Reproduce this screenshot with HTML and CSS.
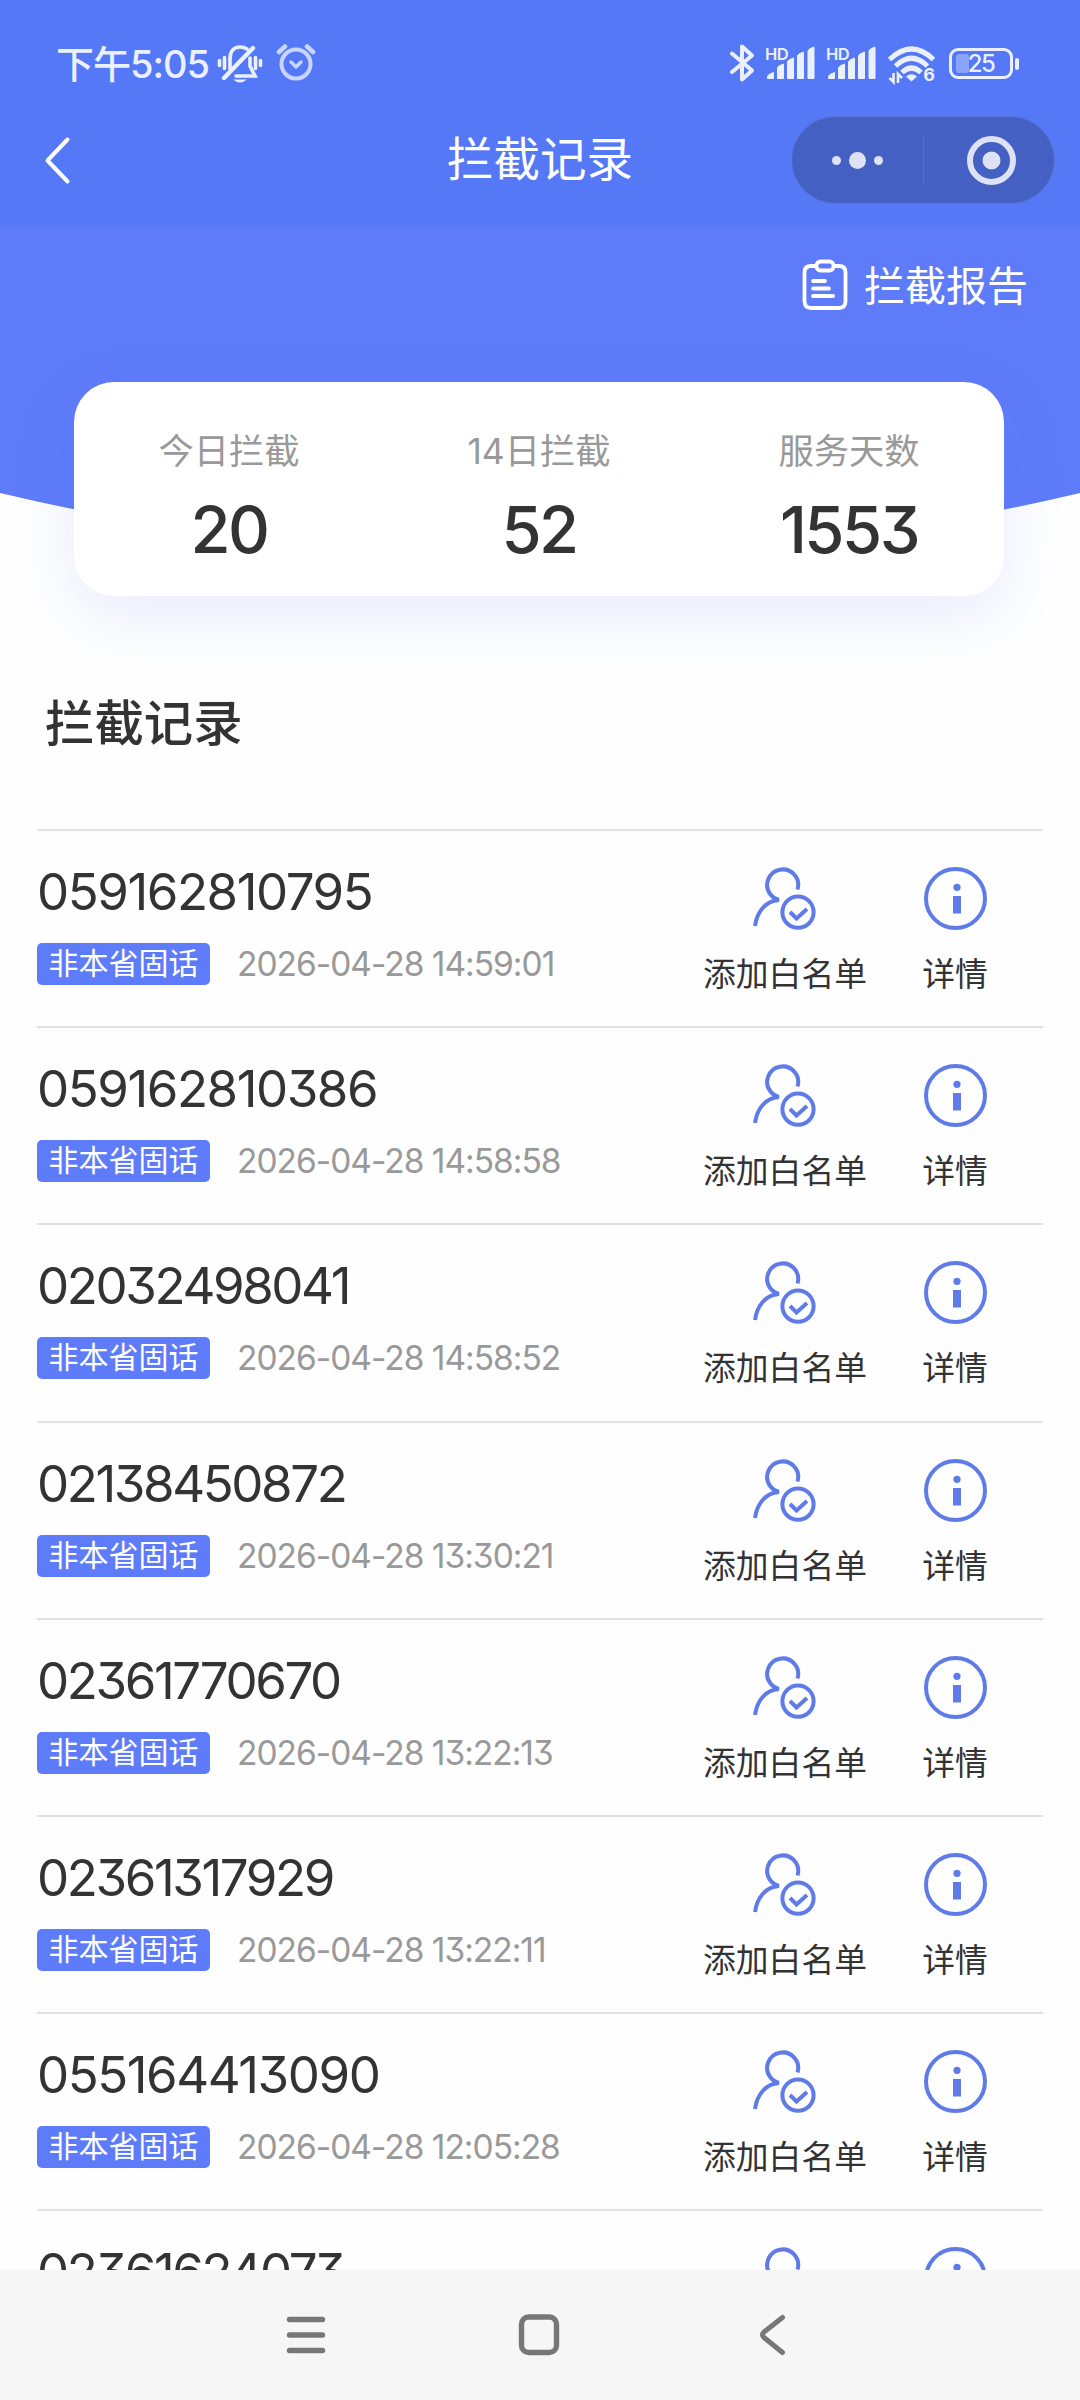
FILE: index.html
```html
<!DOCTYPE html>
<html lang="zh-CN">
<head>
<meta charset="utf-8">
<title>拦截记录</title>
<link rel="stylesheet" href="styles.css">
</head>
<body>
<svg class="defs" aria-hidden="true">
  <symbol id="user-check" viewBox="0 0 66 66">
    <g fill="none" stroke="#5f7be8" stroke-width="4">
      <path d="M3 60C5 45 14 35 27 34Q22 33 18.500 28.500A15.500 15.500 0 1 1 45.500 23.500"/>
      <circle cx="46" cy="46.200" r="15.600"/>
      <path d="M38 46l6.500 6.500L55 43"/>
    </g>
  </symbol>
  <symbol id="info" viewBox="0 0 66 66">
    <circle cx="33.500" cy="32.500" r="29.500" fill="none" stroke="#5f7be8" stroke-width="4"/>
    <circle cx="35" cy="21.300" r="3.600" fill="#5f7be8"/>
    <path d="M31 30h8v17.500h-8z" fill="#5f7be8"/>
  </symbol>
  <symbol id="signal" viewBox="0 0 50 38">
    <path fill="#eaf0ff" stroke="#eaf0ff" stroke-width="1" stroke-linejoin="round" d="M2.500 33.500v-2q0-2 6-4v6zM12.500 33.500V23q0-2 6-4v14.500zM22.500 33.500V17q0-2 6-4v20.500zM32.500 33.500V11q0-2 6-4v26.500zM43 33.500V6q0-2 6-4v31.500z"/>
  </symbol>
</svg>
<div class="phone">
  <header class="topbar">
    <div class="status">
      <div class="status-left">
        <span class="clock">下午5:05</span>
        <svg class="mute" viewBox="0 0 46 42" fill="none" stroke="#eaf0ff" stroke-width="3.600" stroke-linecap="round">
          <path d="M2.500 18.500v5M7.500 15.500v11M38.500 15.500v11M43.500 18.500v5"/>
          <path d="M13 27V17C13 8 18 5 23 5Q27 5 30 7M33 16v8l5 10H19"/>
          <path d="M7 36L36 6" stroke-width="4.400"/>
          <path d="M16 37.500h14q-7 6-14 0z" fill="#eaf0ff" stroke="none"/>
        </svg>
        <svg class="alarm" viewBox="0 0 40 40" fill="none" stroke="#c8d5ff" stroke-linecap="round" stroke-linejoin="round">
          <circle cx="20" cy="22" r="14.500" stroke-width="4"/>
          <path d="M15 20l5 5 5-5" stroke-width="3.500"/>
          <path d="M3 10l6-5.500M37 10l-6-5.500" stroke-width="4.500"/>
        </svg>
      </div>
      <div class="status-right">
        <svg class="bluetooth" viewBox="0 0 24 40" fill="none" stroke="#eaf0ff" stroke-width="4" stroke-linejoin="round" stroke-linecap="round"><path d="M2 10.500l20 17-10 9V3.500l10 9L2 29"/></svg>
        <div class="cell"><span class="hd">HD</span><svg class="bars"><use href="#signal"/></svg></div>
        <div class="cell"><span class="hd">HD</span><svg class="bars"><use href="#signal"/></svg></div>
        <div class="wifi">
          <svg viewBox="0 0 48 40" fill="none" stroke="#eaf0ff">
            <path d="M1.500 14.500Q23.500-6.500 45.500 14.500M7.500 21Q23.500 5.500 39.500 21M14 27.500Q23.500 18.500 33 27.500" stroke-width="5"/>
            <path d="M18 31.500q5.500-4.500 11 0L23.500 36.500z" fill="#eaf0ff" stroke="none"/>
            <path d="M5.500 28v9l-4-4M10 38v-9l4 4" stroke-width="2.600"/>
          </svg>
          <span class="wifi-gen">6</span>
        </div>
        <div class="battery"><span class="level"></span><span class="percent">25</span></div>
        <span class="battery-tip"></span>
      </div>
    </div>
    <div class="navbar">
      <svg class="back" viewBox="0 0 28 50" fill="none" stroke="#fff" stroke-width="4" stroke-linecap="round" stroke-linejoin="round"><path d="M24.500 3.500L4.500 24.500L24.500 45.500"/></svg>
      <h1 class="title">拦截记录</h1>
      <div class="capsule">
        <div class="more"><i class="dot"></i><i class="dot big"></i><i class="dot"></i></div>
        <div class="close"><i class="ring"></i></div>
      </div>
    </div>
  </header>
  <main class="content">
    <section class="hero">
      <svg class="hero-bg" viewBox="0 0 1080 300"><path d="M0 0H1080V268Q820 330 540 330T0 268Z" fill="#5e7bf9"/></svg>
      <a class="report">
        <svg class="clipboard" viewBox="0 0 46 52" fill="none" stroke="#fff" stroke-width="3.800" stroke-linecap="round" stroke-linejoin="round">
          <path d="M14 7H9Q2.500 7 2.500 13.500V42Q2.500 49 9 49H37Q43.500 49 43.500 42V13.500Q43.500 7 37 7H32"/>
          <rect x="14.500" y="2.500" width="17" height="9" rx="4"/>
          <path d="M11 22h12M11 29.500h16M11 37h20"/>
        </svg>
        <span class="report-label">拦截报告</span>
      </a>
      <div class="stats">
        <div class="stat"><span class="stat-label">今日拦截</span><span class="stat-value">20</span></div>
        <div class="stat"><span class="stat-label">14日拦截</span><span class="stat-value">52</span></div>
        <div class="stat"><span class="stat-label">服务天数</span><span class="stat-value">1553</span></div>
      </div>
    </section>
    <h2 class="heading">拦截记录</h2>
    <ul class="records">
      <li class="record"><div class="info"><span class="number long">059162810795</span><div class="meta"><span class="tag">非本省固话</span><span class="time">2026-04-28 14:59:01</span></div></div><div class="action add"><svg><use href="#user-check"/></svg><span>添加白名单</span></div><div class="action detail"><svg><use href="#info"/></svg><span>详情</span></div></li>
      <li class="record"><div class="info"><span class="number long">059162810386</span><div class="meta"><span class="tag">非本省固话</span><span class="time">2026-04-28 14:58:58</span></div></div><div class="action add"><svg><use href="#user-check"/></svg><span>添加白名单</span></div><div class="action detail"><svg><use href="#info"/></svg><span>详情</span></div></li>
      <li class="record"><div class="info"><span class="number">02032498041</span><div class="meta"><span class="tag">非本省固话</span><span class="time">2026-04-28 14:58:52</span></div></div><div class="action add"><svg><use href="#user-check"/></svg><span>添加白名单</span></div><div class="action detail"><svg><use href="#info"/></svg><span>详情</span></div></li>
      <li class="record"><div class="info"><span class="number">02138450872</span><div class="meta"><span class="tag">非本省固话</span><span class="time">2026-04-28 13:30:21</span></div></div><div class="action add"><svg><use href="#user-check"/></svg><span>添加白名单</span></div><div class="action detail"><svg><use href="#info"/></svg><span>详情</span></div></li>
      <li class="record"><div class="info"><span class="number">02361770670</span><div class="meta"><span class="tag">非本省固话</span><span class="time">2026-04-28 13:22:13</span></div></div><div class="action add"><svg><use href="#user-check"/></svg><span>添加白名单</span></div><div class="action detail"><svg><use href="#info"/></svg><span>详情</span></div></li>
      <li class="record"><div class="info"><span class="number">02361317929</span><div class="meta"><span class="tag">非本省固话</span><span class="time">2026-04-28 13:22:11</span></div></div><div class="action add"><svg><use href="#user-check"/></svg><span>添加白名单</span></div><div class="action detail"><svg><use href="#info"/></svg><span>详情</span></div></li>
      <li class="record"><div class="info"><span class="number long">055164413090</span><div class="meta"><span class="tag">非本省固话</span><span class="time">2026-04-28 12:05:28</span></div></div><div class="action add"><svg><use href="#user-check"/></svg><span>添加白名单</span></div><div class="action detail"><svg><use href="#info"/></svg><span>详情</span></div></li>
      <li class="record"><div class="info"><span class="number">02361624073</span></div><div class="action add"><svg><use href="#user-check"/></svg></div><div class="action detail"><svg><use href="#info"/></svg></div></li>
    </ul>
  </main>
  <nav class="system-nav">
    <svg viewBox="0 0 540 60" fill="none" stroke="#777" stroke-width="5.400" stroke-linecap="round" stroke-linejoin="round">
      <path d="M19.500 15.500H52.500M19.500 31H52.500M19.500 46.500H52.500"/>
      <rect x="251.500" y="13" width="35" height="35.500" rx="7"/>
      <path d="M512.500 13.500L494 28Q491 31 494 33.500L512.500 48.500" stroke-width="5"/>
    </svg>
  </nav>
</div>
</body>
</html>
```
FILE: styles.css
```css
* { box-sizing: border-box; }
body {
  margin: 0;
  background: #fefefe;
  font-family: Inter, "Noto Sans CJK SC", sans-serif;
  font-feature-settings: "cv09";
  color: #333;
}
h1, h2, ul { margin: 0; padding: 0; font-weight: 400; }
.defs { display: none; }
.phone { width: 1080px; height: 2400px; display: flex; flex-direction: column; overflow: hidden; }

.topbar { height: 225px; flex: none; background: #5578f6; color: #fff; }
.status { height: 112px; padding: 0 61px 0 56px; display: flex; justify-content: space-between; }
.status-left, .status-right { display: flex; align-items: flex-start; color: #eaf0ff; }
.clock { margin-top: 38px; width: 152px; font-size: 38px; line-height: 52px; font-weight: 500; letter-spacing: -1px; white-space: nowrap; }
.mute { width: 46px; height: 42px; margin: 42px 0 0 9px; }
.alarm { width: 40px; height: 40px; margin: 42px 0 0 13px; }
.bluetooth { width: 24px; height: 40px; margin-top: 43px; }
.cell { position: relative; width: 50px; height: 38px; margin: 45px 0 0 11px; }
.cell .bars { display: block; width: 50px; height: 38px; }
.hd { position: absolute; left: 0; top: 1px; font-size: 16.500px; line-height: 16px; font-weight: 600; letter-spacing: -.5px; }
.wifi { position: relative; width: 48px; height: 40px; margin: 45px 0 0 12px; }
.wifi svg { display: block; width: 48px; height: 40px; }
.wifi-gen { position: absolute; right: 1px; bottom: 2px; font-size: 18px; line-height: 16px; font-weight: 700; }
.battery { position: relative; width: 64px; height: 31px; margin: 48px 0 0 13px; border: 3px solid #eaf0ff; border-radius: 9px; display: flex; justify-content: center; align-items: center; }
.level { position: absolute; left: 4px; top: 3px; width: 13px; height: 19px; border-radius: 3px; background: #8ba4fb; }
.percent { position: relative; font-size: 24px; line-height: 24px; font-weight: 500; letter-spacing: -1.500px; }
.battery-tip { width: 4px; height: 12px; margin: 58px 0 0 2px; border-radius: 2px; background: #eaf0ff; }

.navbar { height: 97px; display: grid; grid-template-columns: 342px 396px 264px; align-items: center; }
.back { width: 28px; height: 50px; margin-left: 43px; }
.title { padding-bottom: 3px; text-align: center; font-size: 46.500px; line-height: 60px; }
.capsule { width: 264px; height: 88px; margin: 0 0 1px 53px; border: 1px solid #5b76d8; border-radius: 44px; background: #4460c2; display: flex; align-items: center; }
.more { width: 132px; height: 50px; border-right: 1px solid #5770d0; display: flex; justify-content: center; align-items: center; gap: 8px; }
.dot { width: 9px; height: 9px; border-radius: 50%; background: #dde2f6; }
.dot.big { width: 17px; height: 17px; }
.close { flex: 1; display: flex; justify-content: center; padding-left: 5px; }
.ring { width: 49px; height: 49px; border: 6px solid #dde2f6; border-radius: 50%; background: radial-gradient(circle, #dde2f6 8.500px, transparent 9.300px); }

.content { flex: 1; min-height: 0; overflow: hidden; }
.hero { position: relative; height: 432px; padding-top: 30px; }
.hero-bg { position: absolute; left: 0; top: 0; width: 1080px; height: 300px; }
.report { position: relative; display: flex; justify-content: flex-end; align-items: center; height: 60px; padding-right: 52px; gap: 16px; color: #fff; font-size: 41px; }
.report-label { padding-bottom: 5px; }
.clipboard { width: 46px; height: 52px; }
.stats { position: relative; width: 930px; height: 214px; margin: 67px 0 0 74px; border-radius: 40px; background: #fff; box-shadow: 0 20px 60px rgba(94, 123, 249, .13); display: grid; grid-template-columns: repeat(3, 310px); }
.stat { display: flex; flex-direction: column; align-items: center; padding-top: 45px; }
.stat-label { font-size: 35.300px; line-height: 50px; color: #999; }
.stat-value { font-size: 65px; line-height: 70px; margin-top: 18px; font-weight: 500; letter-spacing: -2.500px; }

.heading { height: 172px; padding: 31px 0 0 45px; font-size: 49.400px; line-height: 70px; font-weight: 500; }
.records { list-style: none; margin: 0 37px; }
.record { height: 197.200px; border-top: 2px solid #e2e2e2; display: grid; grid-template-columns: 653px 190px 150px; }
.info { padding-top: 31px; }
.number { display: block; font-size: 51px; line-height: 60px; letter-spacing: -2.400px; }
.number.long { letter-spacing: -1.450px; }
.meta { display: flex; align-items: center; margin-top: 21px; }
.tag { width: 173px; height: 42px; border-radius: 5px; background: #5e7bf9; color: #fff; font-size: 30px; line-height: 41px; text-align: center; }
.time { margin-left: 27px; font-size: 33.500px; line-height: 42px; letter-spacing: -1px; color: #999; }
.action { display: flex; flex-direction: column; align-items: center; padding-top: 35px; font-size: 32.800px; line-height: 46px; white-space: nowrap; }
.action svg { width: 66px; height: 66px; }
.action span { margin-top: 19px; }

.system-nav { height: 130px; flex: none; background: #f6f6f6; padding: 34px 270px; }
.system-nav svg { display: block; width: 540px; height: 60px; }
```
